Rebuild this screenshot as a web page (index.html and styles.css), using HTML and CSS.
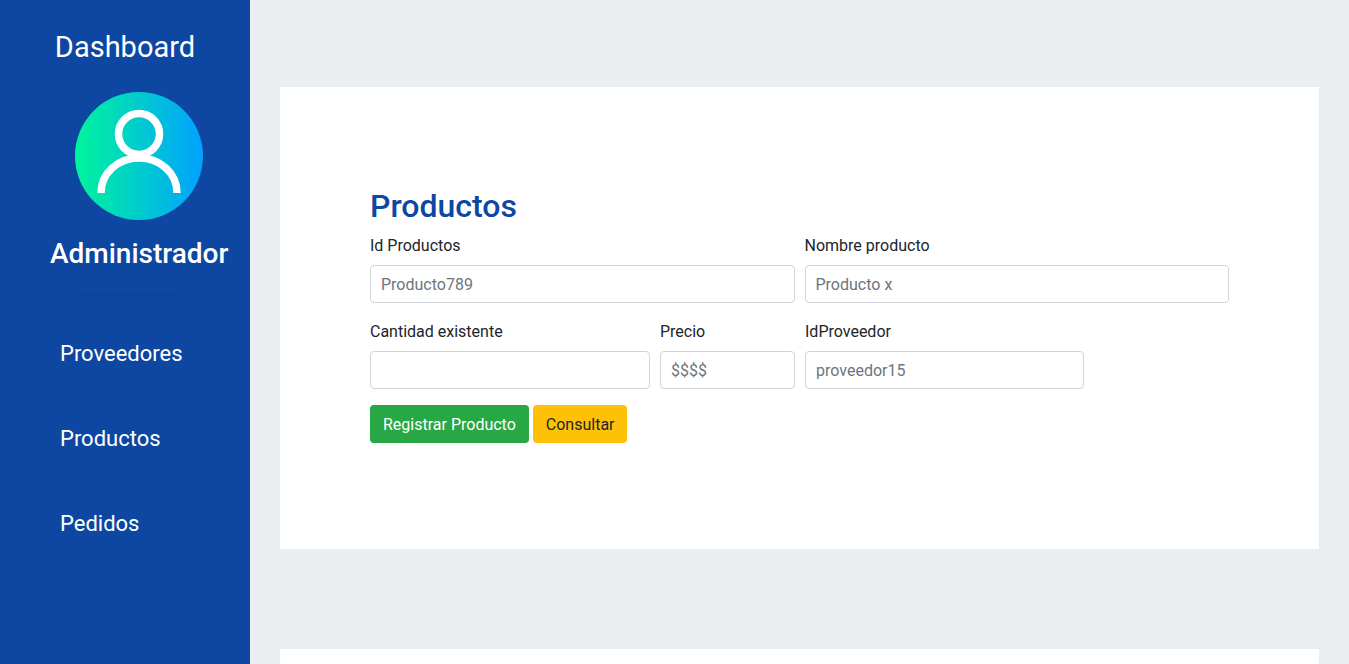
FILE: index.html
```html
<!DOCTYPE html>
<html lang="es">
<head>
  <meta charset="UTF-8">
  <meta name="viewport" content="width=device-width, initial-scale=1.0">
  <title>Dashboard</title>
  <link rel="stylesheet" href="styles.css">
</head>
<body>

  <div class="sidebar">
    <h3 class="brand">Dashboard</h3>
    <div class="avatar">
      <svg width="128" height="128" viewBox="0 0 128 128" fill="none" stroke="#fff" stroke-width="7.5">
        <circle cx="64" cy="42" r="20.5"></circle>
        <path d="M26 101C26 81 43 66 64 66S102 81 102 101"></path>
      </svg>
    </div>
    <h4 class="role">Administrador</h4>
    <hr class="divider">
    <a class="nav-link" href="#">Proveedores</a>
    <a class="nav-link" href="#">Productos</a>
    <a class="nav-link" href="#">Pedidos</a>
  </div>

  <div class="content">
    <div class="card">
      <h2 class="card-title">Productos</h2>
      <form class="form">
        <div class="row">
          <div class="field col-half">
            <label>Id Productos</label>
            <input type="text" placeholder="Producto789">
          </div>
          <div class="field col-half">
            <label>Nombre producto</label>
            <input type="text" placeholder="Producto x">
          </div>
        </div>
        <div class="row">
          <div class="field col-qty">
            <label>Cantidad existente</label>
            <input type="text">
          </div>
          <div class="field col-price">
            <label>Precio</label>
            <input type="text" placeholder="$$$$">
          </div>
          <div class="field col-prov">
            <label>IdProveedor</label>
            <input type="text" placeholder="proveedor15">
          </div>
        </div>
        <div class="actions">
          <button type="button" class="btn btn-green">Registrar Producto</button>
          <button type="button" class="btn btn-yellow">Consultar</button>
        </div>
      </form>
    </div>
    <div class="card card-next"></div>
  </div>

</body>
</html>
```

FILE: styles.css
```css
* {
  box-sizing: border-box;
}

html, body {
  height: 100%;
}

body {
  margin: 0;
  height: 664px;
  overflow: hidden;
  display: flex;
  font-family: 'Roboto', sans-serif;
  font-size: 16px;
  line-height: 1.5;
  color: #212529;
  background-color: #ebeef1;
}

.sidebar {
  width: 250px;
  flex-shrink: 0;
  padding-top: 28px;
  background-color: #0d47a1;
  color: #fff;
}

.brand {
  margin: 0;
  width: 250px;
  text-align: center;
  font-size: 29px;
  font-weight: 400;
  line-height: 38px;
}

.avatar {
  width: 128px;
  height: 128px;
  margin: 26px 0 0 75px;
  border-radius: 50%;
  background: linear-gradient(90deg, #00f59b, #00a2ff);
}

.role {
  margin: 17px 0 0 50px;
  font-size: 28px;
  font-weight: 500;
  line-height: 34px;
  white-space: nowrap;
}

.divider {
  width: 100px;
  height: 1px;
  margin: 23px 0 0 75px;
  border: 0;
  background-color: rgba(0, 0, 0, 0.1);
}

.nav-link {
  display: block;
  height: 85px;
  padding-left: 60px;
  font-size: 22px;
  line-height: 30px;
  color: #fff;
  text-decoration: none;
}

.divider + .nav-link {
  margin-top: 44px;
}

.content {
  flex: 1;
  padding: 87px 30px 0;
}

.card {
  height: 462px;
  padding: 100px 90px 0;
  background-color: #fff;
}

.card-next {
  margin-top: 100px;
}

.card-title {
  margin: 0 0 8px;
  font-size: 32px;
  font-weight: 500;
  line-height: 38px;
  color: #0d47a1;
}

.row {
  display: flex;
  gap: 10px;
  margin-bottom: 16px;
}

.field {
  display: flex;
  flex-direction: column;
}

.col-half {
  flex: 1;
}

.col-qty {
  width: 280px;
}

.col-price {
  width: 135px;
}

.col-prov {
  width: 279px;
}

label {
  padding-top: 1px;
  margin-bottom: 7px;
}

input {
  height: 38px;
  width: 100%;
  padding: 6px 10px;
  border: 1px solid #ced4da;
  border-radius: 4px;
  font-family: inherit;
  font-size: 16px;
  color: #495057;
  background-color: #fff;
}

input::placeholder {
  color: #6c757d;
}

.actions {
  display: flex;
  gap: 4px;
}

.btn {
  height: 38px;
  padding: 7px 12px 5px;
  border: 1px solid transparent;
  border-radius: 4px;
  font-family: inherit;
  font-size: 16px;
  line-height: 24px;
  cursor: pointer;
}

.btn-green {
  color: #fff;
  background-color: #28a745;
}

.btn-yellow {
  width: 94px;
  color: #212529;
  background-color: #ffc107;
}
```
